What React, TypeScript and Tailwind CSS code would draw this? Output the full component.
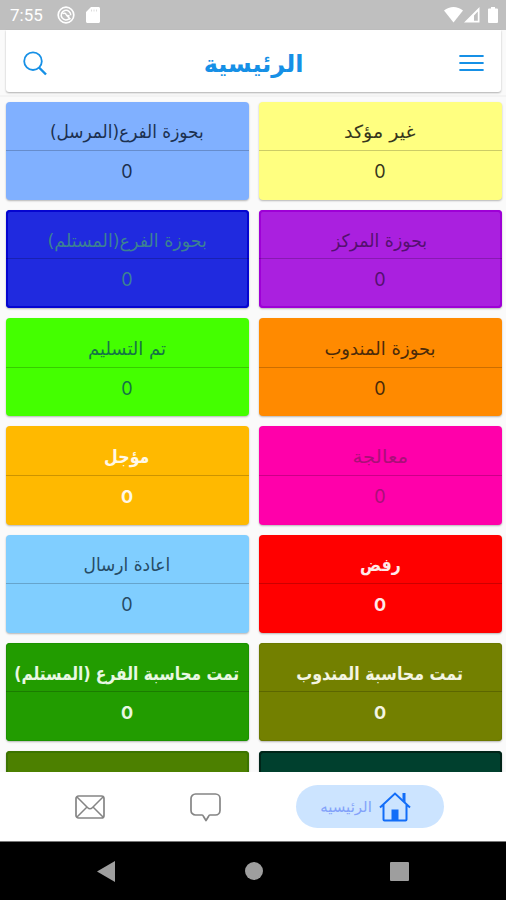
import React from 'react';

type Status = {
  label?: string;
  count?: number;
  card: string;
  text?: string;
  stretch?: string;
};

const STATUSES: Status[] = [
  { label: 'غير مؤكد', count: 0, card: 'bg-[#ffff80]', text: 'text-[#37371c]', stretch: 'scale-x-[1.06]' },
  { label: 'بحوزة الفرع(المرسل)', count: 0, card: 'bg-[#80b0ff]', text: 'text-[#1c3050]', stretch: 'scale-x-[0.94]' },
  { label: 'بحوزة المركز', count: 0, card: 'bg-[#aa20df] inset-ring-2 inset-ring-[#9e00d6]', text: 'text-[#54106f]', stretch: 'scale-x-[0.96]' },
  { label: 'بحوزة الفرع(المستلم)', count: 0, card: 'bg-[#202adf] inset-ring-2 inset-ring-[#0505d0]', text: 'text-[#3c8192]', stretch: 'scale-x-[0.97]' },
  { label: 'بحوزة المندوب', count: 0, card: 'bg-[#ff8a00]', text: 'text-[#4a2a0a]' },
  { label: 'تم التسليم', count: 0, card: 'bg-[#44ff00]', text: 'text-[#147446]' },
  { label: 'معالجة', count: 0, card: 'bg-[#ff00aa]', text: 'text-[#aa0f78]', stretch: 'scale-x-[1.1]' },
  { label: 'مؤجل', count: 0, card: 'bg-[#ffb900]', text: 'text-[#fff8e8] font-bold', stretch: 'scale-x-[0.88]' },
  { label: 'رفض', count: 0, card: 'bg-[#ff0000]', text: 'text-[#ffeaea] font-bold', stretch: 'scale-x-[0.87]' },
  { label: 'اعادة ارسال', count: 0, card: 'bg-[#80ceff]', text: 'text-[#264b65]', stretch: 'scale-x-[0.945]' },
  { label: 'تمت محاسبة المندوب', count: 0, card: 'bg-[#738000] inset-ring inset-ring-[#6b7800]', text: 'text-[#f4f5e2] font-bold', stretch: 'scale-x-[0.88]' },
  { label: 'تمت محاسبة الفرع (المستلم)', count: 0, card: 'bg-[#229c00] inset-ring inset-ring-[#1c9200]', text: 'text-[#e8f8e2] font-bold', stretch: 'scale-x-[0.86]' },
  { card: 'bg-[#00402e] inset-ring-2 inset-ring-[#002418]' },
  { card: 'bg-[#4c8000] inset-ring-2 inset-ring-[#3c7400]' },
];

const StatusBar = () => (
  <div dir="ltr" className="flex h-[30px] shrink-0 items-center bg-[#bfbfbf] text-white">
    <span className="ml-[10px] w-[36px] font-[Roboto] text-[17px] leading-none">7:55</span>
    <svg className="ml-[11px]" width="18" height="18" viewBox="0 0 18 18" fill="none" stroke="currentColor">
      <circle cx="9" cy="9" r="7.8" strokeWidth="1.7" />
      <path d="M12.6 12.3A4.8 4.8 0 1 1 13.8 9.2M5.6 7.6c2-.9 3.1-.2 3.6 1 .5 1.1 1.6 1.5 3.4 1.1M9.500 9.300l4 4" strokeWidth="1.500" />
    </svg>
    <svg className="ml-[11px]" width="14" height="16" viewBox="0 0 14 16" fill="currentColor">
      <path d="M5 0h7.500A1.400 1.400 0 0 1 14 1.400v13.200a1.400 1.400 0 0 1-1.500 1.400h-11A1.400 1.400 0 0 1 0 14.600V5z" />
      <path d="M5.500 2.500v2M8 2.500v2M10.500 2.500v2" stroke="#dcdcdc" strokeWidth="1" />
    </svg>
    <svg className="ml-auto" width="19" height="16" viewBox="0 0 19 16" fill="currentColor">
      <path d="M0 3.600C5.500-1.200 13.500-1.200 19 3.600L9.500 15.500z" />
    </svg>
    <svg className="ml-[1px]" width="16" height="16" viewBox="0 0 16 16" fill="currentColor">
      <path fillRule="evenodd" d="M15.500 0v15.500H0zM13.800 4.500 10 8.500v5.300h3.800z" />
    </svg>
    <svg className="mr-[8px] ml-[8px]" width="10" height="16" viewBox="0 0 10 16" fill="currentColor">
      <path d="M3 0h4v1.600h2a1 1 0 0 1 1 1V15a1 1 0 0 1-1 1H1a1 1 0 0 1-1-1V2.600a1 1 0 0 1 1-1h2z" />
    </svg>
  </div>
);

const Header = () => (
  <header className="mr-[5px] ml-[6px] flex h-[62px] shrink-0 items-center justify-between rounded-b-[3px] bg-white px-[17px] pt-[4px] text-[#1690e6] shadow-[0_1px_2px_rgba(0,0,0,0.3)]">
    <svg width="25" height="18" viewBox="0 0 25 18" stroke="currentColor" strokeWidth="2.200" strokeLinecap="round">
      <path d="M1.200 2h22.600M1.200 9h22.600M1.200 16h22.600" />
    </svg>
    <h1 className="pt-[2px] text-[24px] leading-[44px] font-bold">الرئيسية</h1>
    <svg width="25" height="25" viewBox="0 0 25 25" fill="none" stroke="currentColor">
      <circle cx="10" cy="10.200" r="8.800" strokeWidth="1.800" />
      <path d="m16 16.500 7 7" strokeWidth="2.400" />
    </svg>
  </header>
);

const StatusCard = ({ label, count, card, text = '', stretch = '' }: Status) => (
  <div className={`h-[98.3px] rounded-[4px] shadow-[0_1px_2px_rgba(0,0,0,0.28)] ${card} ${text}`}>
    {label && (
      <>
        <div className="flex h-[49.500px] items-center justify-center border-b-[1.500px] border-black/20 pt-[12px] text-[18px] whitespace-nowrap">
          <span className={`inline-block ${stretch}`}>{label}</span>
        </div>
        <div className="flex h-[41px] items-center justify-center font-[Inter] text-[18px]">{count}</div>
      </>
    )}
  </div>
);

const TabBar = () => (
  <nav dir="ltr" className="flex h-[69px] shrink-0 items-center bg-white text-[#858585]">
    <svg className="ml-[75px]" width="30" height="24" viewBox="0 0 30 24" fill="none" stroke="currentColor" strokeWidth="1.700">
      <rect x="1" y="1" width="28" height="22" rx="2.500" />
      <path d="m2 2 10.500 10.500c1.500 1.500 3.500 1.500 5 0L28 2M2 22l9.500-9.500M28 22l-9.500-9.500" strokeWidth="1.500" />
    </svg>
    <svg className="mt-[2px] ml-[85px]" width="31" height="29" viewBox="0 0 31 29" fill="none" stroke="currentColor" strokeWidth="1.700" strokeLinejoin="round">
      <path d="M5.500 1h20a4.500 4.500 0 0 1 4.500 4.500v12a4.500 4.500 0 0 1-4.500 4.500h-5.500q-1 0-1.500 1.500l-2.500 4-2.500-4q-.500-1.500-1.500-1.500H5.500A4.500 4.500 0 0 1 1 17.500v-12A4.500 4.500 0 0 1 5.500 1z" />
    </svg>
    <div className="ml-[75px] flex h-[43px] w-[148px] items-center rounded-full bg-[#cce4ff] pl-[24px]">
      <span className="w-[52px] pt-[2px] text-center text-[15px] whitespace-nowrap text-[#83a2fa]">الرئيسيه</span>
      <svg className="ml-[7px]" width="32" height="30" viewBox="0 0 32 30" fill="none" stroke="#126df8" strokeWidth="2">
        <path d="M1 15.500 16 1.500l15 14M4.500 13v14.500a1 1 0 0 0 1 1h21a1 1 0 0 0 1-1V13" />
        <path d="M23.500 1h3v9.500l-3-2.800z" fill="#126df8" stroke="none" />
        <path d="M12.500 17.500h7V28h-7z" fill="#126df8" stroke="none" />
      </svg>
    </div>
  </nav>
);

const SystemNav = () => (
  <div dir="ltr" className="flex h-[59px] shrink-0 items-center border-t border-[#777] bg-black text-[#9e9e9e]">
    <svg className="ml-[97px]" width="18" height="21" viewBox="0 0 18 21" fill="currentColor">
      <path d="M18 0v21L0 10.500z" />
    </svg>
    <div className="ml-[130px] size-[18px] rounded-full bg-current" />
    <div className="ml-[127px] size-[19px] rounded-[1px] bg-current" />
  </div>
);

export default function App() {
  return (
    <div dir="rtl" className="flex h-[900px] w-[506px] flex-col overflow-hidden bg-[#fafafa] font-['DejaVu_Sans',sans-serif]">
      <StatusBar />
      <Header />
      <main className="mt-[3px] min-h-0 flex-1 overflow-hidden border-t-2 border-[#f3f3f3] pt-[4.500px] pr-[4.500px] pl-[5.500px]">
        <div className="grid grid-cols-2 gap-[10px]">
          {STATUSES.map((status, i) => (
            <StatusCard key={i} {...status} />
          ))}
        </div>
      </main>
      <TabBar />
      <SystemNav />
    </div>
  );
}
